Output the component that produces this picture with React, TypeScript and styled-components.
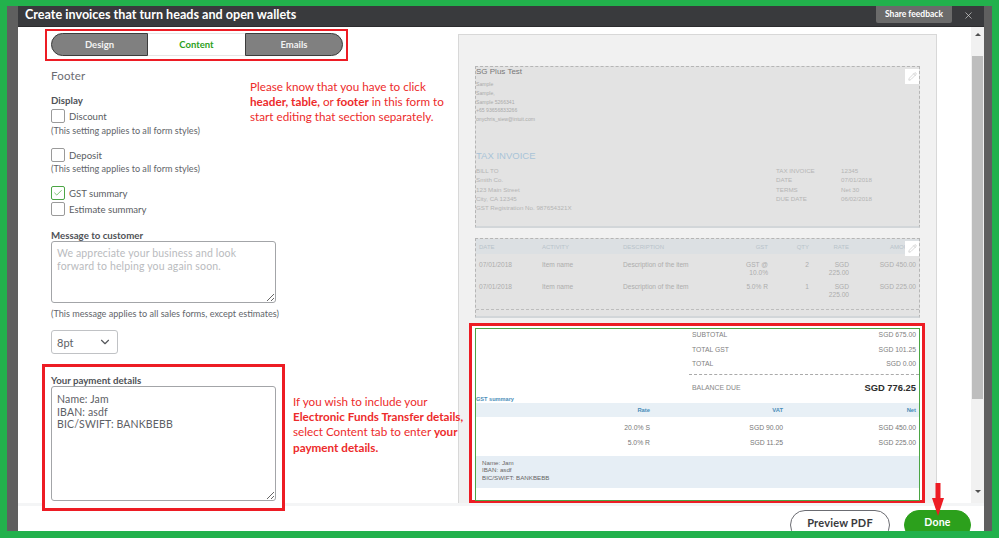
import React from "react";
import styled, { createGlobalStyle } from "styled-components";
import { Check, ChevronDown, X, Pencil } from "lucide-react";

const Global = createGlobalStyle`
  html, body { margin: 0; padding: 0; background: #22b14c; }
  * { box-sizing: border-box; }
`;
const Frame = styled.div`
  width: 999px; height: 538px; padding: 6px 7px 7px; background: #22b14c; overflow: hidden; position: relative;
  font-family: Lato, "Open Sans", sans-serif; color: #55585c;
`;
const Shell = styled.div`
  height: 525px; display: grid; grid-template-columns: 11px 1fr 8px; background: #fff; overflow: hidden;
`;
const Strip = styled.div`background: #5f5f5f;`;
const Main = styled.div`display: flex; flex-direction: column; min-width: 0;`;
const Header = styled.header`
  height: 21px; background: #393a3d; display: flex; align-items: flex-start; padding-left: 7px; color: #fff; border-bottom: 1px solid #2c2c2e; position: relative;
`;
const Title = styled.h1`margin: 0; font-size: 12.6px; line-height: 18px; font-weight: 700; color: #fff; flex: 1;`;
const Feedback = styled.div`
  width: 76px; height: 17px; background: #6b6b6b; color: #fff; font-size: 8.5px; font-weight: 700; text-align: center; line-height: 17px; border-radius: 0 0 2px 2px;
`;
const CloseBtn = styled.div`width: 32px; height: 18px; display: flex; align-items: center; justify-content: center; color: #d4d4d4;`;
const Body = styled.div`height: 476px; display: flex; position: relative;`;
const Left = styled.div`
  width: 440px; flex: none; padding: 2px 0 0 33px; display: flex; flex-direction: column; align-items: flex-start; position: relative;
  & > * { flex: none; }
`;
const TabFrame = styled.div`
  margin-left: -6px; width: 303px; height: 32px; border: 2px solid #ed1c24; padding: 2px 3px 2px 4px;
`;
const Tabs = styled.div`display: grid; grid-template-columns: 97px 97px 98px; height: 23px;`;
const Tab = styled.div<{ $active?: boolean; $pos?: string }>`
  display: flex; align-items: center; justify-content: center; font-size: 9.5px; font-weight: 700;
  background: ${p => (p.$active ? "#fff" : "#808080")};
  color: ${p => (p.$active ? "#2ca01c" : "#f2f2f2")};
  border: 1px solid ${p => (p.$active ? "#e6e6e6" : "#3c3c3c")};
  border-left-width: ${p => (p.$active ? 0 : 1)}px;
  border-right-width: ${p => (p.$active ? 0 : 1)}px;
  border-radius: ${p => (p.$pos === "l" ? "12px 0 0 12px" : p.$pos === "r" ? "0 12px 12px 0" : "0")};
`;
const SectionName = styled.div`margin-top: 7px; font-size: 11.5px; line-height: 16px; color: #6b6c72; letter-spacing: .2px;`;
const Label = styled.div<{ $mt: number }>`margin-top: ${p => p.$mt}px; font-size: 9.7px; line-height: 11px; font-weight: 700; color: #4f5257;`;
const CheckRow = styled.div<{ $mt: number }>`margin-top: ${p => p.$mt}px; display: flex; align-items: center; gap: 4px; height: 14px; font-size: 9.6px; color: #5a5d62;`;
const Box = styled.div<{ $on?: boolean }>`
  width: 14px; height: 14px; border: 1px solid ${p => (p.$on ? "#4ba544" : "#9a9a9a")}; border-radius: 2px; background: #fff; display: flex; align-items: center; justify-content: center; color: #2ca01c;
`;
const Hint = styled.div<{ $mt: number }>`margin-top: ${p => p.$mt}px; font-size: 9.1px; line-height: 14px; color: #63666b; white-space: nowrap;`;
const Area = styled.textarea<{ $h: number; $pt: number }>`
  display: block; width: 225px; height: ${p => p.$h}px; margin: 0; padding: ${p => p.$pt}px 5px; resize: both; border: 1px solid #a3a5a8; border-radius: 3px; outline: none; background: #fff;
  font-family: Lato, sans-serif; font-size: 10.5px; line-height: 12.6px; color: #5d6065; overflow: hidden; letter-spacing: .15px;
  &::placeholder { color: #b9bbbe; opacity: 1; }
`;
const SelectBox = styled.div`
  margin-top: 9px; width: 67px; height: 24px; border: 1px solid #c0c2c5; border-radius: 3px; display: flex; align-items: center; justify-content: space-between; padding: 0 5px; font-size: 11px; color: #5d6065;
`;
const PayFrame = styled.div`
  margin: 10px 0 0 -9px; width: 243px; height: 147px; border: 3px solid #ed1c24; padding: 8px 0 0 6px; background: #fff; position: relative; z-index: 2;
`;
const Note = styled.div<{ $x: number; $y: number }>`
  position: absolute; left: ${p => p.$x}px; top: ${p => p.$y}px; color: #ed2b2b; font-size: 11.7px; line-height: 15.2px; white-space: nowrap; z-index: 3;
  b { font-weight: 700; }
`;
const PreviewCol = styled.div`width: 512px; flex: none; display: flex; position: relative;`;
const Sheet = styled.div`
  margin-top: 7px; width: 479px; height: 469px; background: #f1f1f1; border: 1px solid #d8d8d8; border-bottom: 0; padding: 31px 0 0 16px; overflow: visible; flex: none;
`;
const Dashed = styled.section<{ $h: number; $mt?: number }>`
  position: relative; width: 445px; height: ${p => p.$h}px; margin-top: ${p => p.$mt || 0}px; background: #e3e3e3; border: 1px dashed #b5b5b5; border-bottom: 2px solid #d2d6d9; overflow: hidden;
  font-family: "Liberation Sans", Arial, sans-serif; color: #b8b8b8;
`;
const PencilBox = styled.div`
  position: absolute; right: 0; top: 2px; width: 14px; height: 15px; background: #fff; display: flex; align-items: center; justify-content: center; color: #9a9a9a;
`;
const Company = styled.div`font-size: 8px; line-height: 9px; color: #777;`;
const Tiny = styled.div`padding: 4px 0 0 0; font-size: 5.1px; line-height: 8.8px; color: #aaa; white-space: nowrap;`;
const InvTitle = styled.div`margin: 26px 0 0 0; font-size: 9.5px; line-height: 12px; color: #a9c3d8;`;
const Meta = styled.div`display: flex; justify-content: space-between; padding: 4px 0 0 0; font-size: 6.2px; line-height: 9.3px; color: #b5b5b5;`;
const MetaRight = styled.div`display: grid; grid-template-columns: 65px 78px;`;
const HeadRow = styled.div`
  height: 15px; background: #dce0e3; display: grid; grid-template-columns: 63px 81px 1fr 45px 41px 40px 67px; padding: 0 3px; align-items: center; font-size: 6px; color: #b8c3ca; white-space: nowrap;
`;
const ItemRow = styled.div<{ $h: number; $pt: number }>`
  height: ${p => p.$h}px; padding: ${p => p.$pt}px 3px 0; display: grid; grid-template-columns: 63px 81px 1fr 45px 41px 40px 67px; font-size: 6.6px; line-height: 7.6px; color: #adadad; white-space: nowrap;
`;
const Cell = styled.div<{ $r?: boolean }>`text-align: ${p => (p.$r ? "right" : "left")}; white-space: pre-line;`;
const Spacer = styled.div`height: 11px;`;
const DashLine = styled.div`border-top: 1px dashed #bdbdbd;`;
const FootFrame = styled.div`margin: 5px 0 0 -6px; width: 456px; height: 180px; border: 3px solid #ed1c24; padding: 2px 0 0 3px; background: #fff; position: relative; z-index: 2;`;
const FootInner = styled.div`
  width: 445px; height: 173px; border: 1px solid #4ba544; font-family: "Liberation Sans", Arial, sans-serif; font-size: 6.4px; color: #777; background: #fff; overflow: hidden;
`;
const Totals = styled.div`margin: -1px 0 0 213px; padding: 0 3px;`;
const TotalRow = styled.div`display: flex; justify-content: space-between; height: 14.5px; line-height: 14.5px; color: #808080; font-size: 6.8px;`;
const TotalDash = styled.div`margin: 2px -3px 0 -3px; border-top: 1px dashed #aaa;`;
const Balance = styled.div`display: flex; justify-content: space-between; align-items: center; height: 26px; font-size: 6.9px; color: #888; strong { font-size: 9.4px; color: #2c2c2c; }`;
const SumTitle = styled.div`height: 6px; line-height: 6px; margin-top: -5px; font-size: 5.6px; font-weight: 700; color: #4a8db9;`;
const SumHead = styled.div`
  margin-top: 1px; height: 14px; background: #e8f0f6; display: grid; grid-template-columns: 174px 133px 133px; align-items: center; font-size: 5.8px; font-weight: 700; color: #4a8db9;
`;
const SumRow = styled.div<{ $mt: number }>`margin-top: ${p => p.$mt}px; height: 15px; line-height: 15px; display: grid; grid-template-columns: 174px 133px 133px; font-size: 6.8px; color: #777;`;
const PayBlock = styled.div`margin-top: 6px; height: 32px; background: #e6eef5; padding: 3px 6px; font-size: 6.2px; line-height: 7.6px; color: #666; white-space: pre-line;`;
const Scroll = styled.div`margin-left: 34px; width: 13px; height: 476px; background: #f1f1f1; position: relative; flex: none; display: flex; flex-direction: column; align-items: center;`;
const Arrow = styled.div<{ $up?: boolean }>`
  margin-top: ${p => (p.$up ? 6 : 0)}px; width: 0; height: 0; border-left: 3px solid transparent; border-right: 3px solid transparent;
  ${p => (p.$up ? "border-bottom: 3px solid #505050;" : "border-top: 3px solid #505050;")}
`;
const Thumb = styled.div`margin: 20px 0 91px; width: 11px; height: 343px; background: #bebebe; flex: none;`;
const Footer = styled.footer`
  height: 28px; border-top: 3px solid #f4f5f6; display: flex; justify-content: flex-end; gap: 14px; padding: 4px 13px 0 0; background: #fff; overflow: visible;
`;
const Pill = styled.div<{ $green?: boolean }>`
  height: 30px; width: ${p => (p.$green ? 67 : 100)}px; border-radius: 15px; display: flex; justify-content: center; padding-top: 5px;
  font-size: ${p => (p.$green ? 10.5 : 11)}px; font-weight: 700; letter-spacing: .2px;
  background: ${p => (p.$green ? "#2ca01c" : "#fff")}; color: ${p => (p.$green ? "#fff" : "#393a3d")};
  border: 1px solid ${p => (p.$green ? "#2ca01c" : "#6b6c72")};
`;
const RedArrow = styled.svg`position: absolute; left: 931px; top: 483px; z-index: 5;`;

const rows = [
  { h: 29, pt: 7, cells: ["07/01/2018", "Item name", "Description of the item", "GST @\n10.0%", "2", "SGD\n225.00", "SGD 450.00"] },
  { h: 15, pt: 0, cells: ["07/01/2018", "Item name", "Description of the item", "5.0% R", "1", "SGD\n225.00", "SGD 225.00"] },
];
const heads = ["DATE", "ACTIVITY", "DESCRIPTION", "GST", "QTY", "RATE", "AMOUNT"];

export default function App() {
  return (
    <Frame>
      <Global />
      <Shell>
        <Strip />
        <Main>
          <Header>
            <Title>Create invoices that turn heads and open wallets</Title>
            <Feedback>Share feedback</Feedback>
            <CloseBtn><X size={11} strokeWidth={1.5} /></CloseBtn>
          </Header>
          <Body>
            <Left>
              <TabFrame>
                <Tabs>
                  <Tab $pos="l">Design</Tab>
                  <Tab $active>Content</Tab>
                  <Tab $pos="r">Emails</Tab>
                </Tabs>
              </TabFrame>
              <SectionName>Footer</SectionName>
              <Label $mt={11}>Display</Label>
              <CheckRow $mt={3}><Box />Discount</CheckRow>
              <Hint $mt={1}>(This setting applies to all form styles)</Hint>
              <CheckRow $mt={10}><Box />Deposit</CheckRow>
              <Hint $mt={0}>(This setting applies to all form styles)</Hint>
              <CheckRow $mt={10}><Box $on><Check size={10} strokeWidth={1.5} /></Box>GST summary</CheckRow>
              <CheckRow $mt={2}><Box />Estimate summary</CheckRow>
              <Label $mt={14}>Message to customer</Label>
              <Area $h={62} $pt={5} readOnly placeholder={"We appreciate your business and look forward to helping you again soon."} />
              <Hint $mt={4}>(This message applies to all sales forms, except estimates)</Hint>
              <SelectBox>8pt<ChevronDown size={14} color="#55585c" /></SelectBox>
              <PayFrame>
                <Label $mt={0}>Your payment details</Label>
                <Area $h={115} $pt={6} readOnly value={"Name: Jam\nIBAN: asdf\nBIC/SWIFT: BANKBEBB"} />
              </PayFrame>
              <Note $x={232} $y={52}>Please know that you have to click<br /><b>header, table,</b> or <b>footer</b> in this form to<br />start editing that section separately.</Note>
              <Note $x={275} $y={367}>If you wish to include your<br /><b>Electronic Funds Transfer details,</b><br />select Content tab to enter <b>your</b><br /><b>payment details.</b></Note>
            </Left>
            <PreviewCol>
              <Sheet>
                <Dashed $h={162}>
                  <PencilBox><Pencil size={9} strokeWidth={1} /></PencilBox>
                  <Company>SG Plus Test</Company>
                  <Tiny>Sample<br />Sample,<br />Sample 5266341<br />+65 93656833266<br />onychris_siew@intuit.com</Tiny>
                  <InvTitle>TAX INVOICE</InvTitle>
                  <Meta>
                    <div>BILL TO<br />Smith Co.<br />123 Main Street<br />City, CA 12345<br />GST Registration No. 987654321X</div>
                    <MetaRight>
                      <div>TAX INVOICE<br />DATE<br />TERMS<br />DUE DATE</div>
                      <div>12345<br />07/01/2018<br />Net 30<br />06/02/2018</div>
                    </MetaRight>
                  </Meta>
                </Dashed>
                <Dashed $h={80} $mt={10}>
                  <PencilBox><Pencil size={9} strokeWidth={1} /></PencilBox>
                  <HeadRow>
                    {heads.map((h, i) => <Cell key={h} $r={i > 2}>{h}</Cell>)}
                  </HeadRow>
                  {rows.map((r, ri) => (
                    <ItemRow key={ri} $h={r.h} $pt={r.pt}>
                      {r.cells.map((c, i) => <Cell key={i} $r={i > 2}>{c}</Cell>)}
                    </ItemRow>
                  ))}
                  <Spacer />
                  <DashLine />
                </Dashed>
                <FootFrame>
                  <FootInner>
                    <Totals>
                      <TotalRow><span>SUBTOTAL</span><span>SGD 675.00</span></TotalRow>
                      <TotalRow><span>TOTAL GST</span><span>SGD 101.25</span></TotalRow>
                      <TotalRow><span>TOTAL</span><span>SGD 0.00</span></TotalRow>
                      <TotalDash />
                      <Balance><span>BALANCE DUE</span><strong>SGD 776.25</strong></Balance>
                    </Totals>
                    <SumTitle>GST summary</SumTitle>
                    <SumHead><Cell $r>Rate</Cell><Cell $r>VAT</Cell><Cell $r>Net</Cell></SumHead>
                    <SumRow $mt={3}><Cell $r>20.0% S</Cell><Cell $r>SGD 90.00</Cell><Cell $r>SGD 450.00</Cell></SumRow>
                    <SumRow $mt={0}><Cell $r>5.0% R</Cell><Cell $r>SGD 11.25</Cell><Cell $r>SGD 225.00</Cell></SumRow>
                    <PayBlock>{"Name: Jam\nIBAN: asdf\nBIC/SWIFT: BANKBEBB"}</PayBlock>
                  </FootInner>
                </FootFrame>
              </Sheet>
              <Scroll>
                <Arrow $up />
                <Thumb />
                <Arrow />
              </Scroll>
            </PreviewCol>
          </Body>
          <Footer>
            <Pill>Preview PDF</Pill>
            <Pill $green>Done</Pill>
          </Footer>
        </Main>
        <Strip />
      </Shell>
      <RedArrow width="14" height="33" viewBox="0 0 14 33"><path d="M4.500 0h5v15H13L7 33 1 15h3.500z" fill="#ed1c24" /></RedArrow>
    </Frame>
  );
}
